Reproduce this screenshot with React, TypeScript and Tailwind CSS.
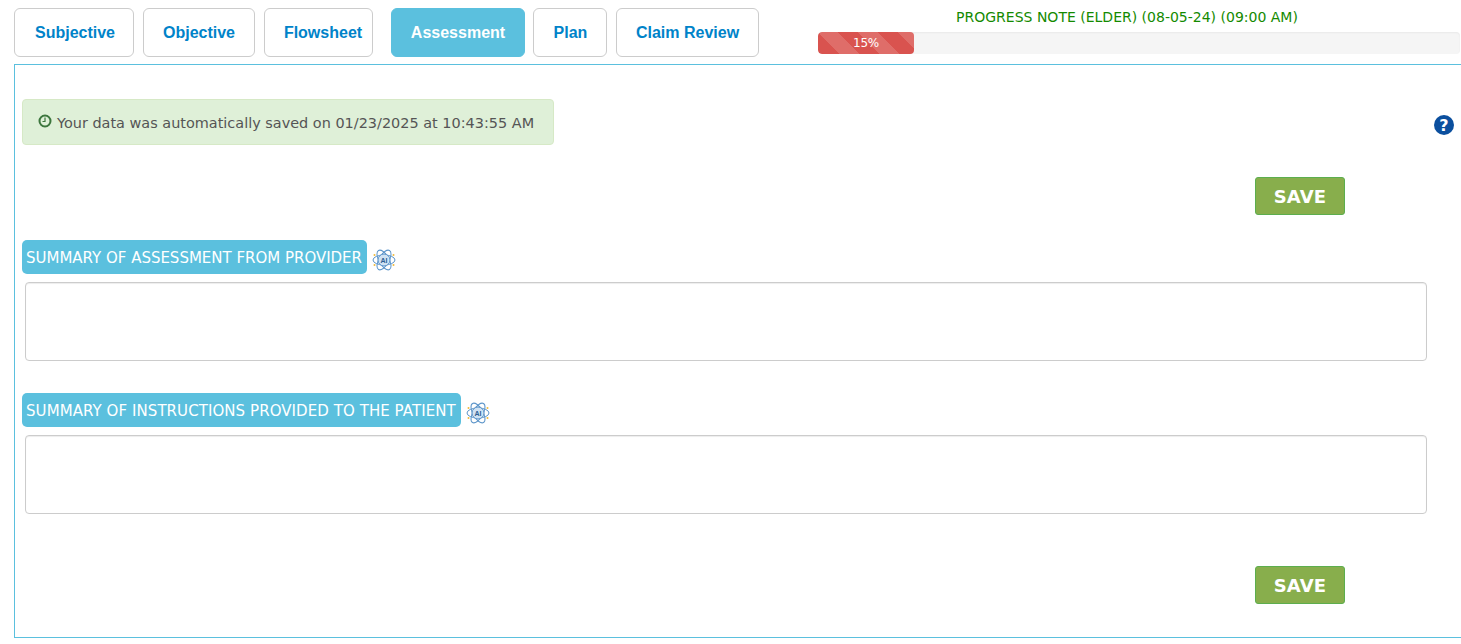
const tabs = [
  { label: 'Subjective', width: 'w-[120px] pl-[2px]' },
  { label: 'Objective', width: 'w-[112px]' },
  { label: 'Flowsheet', width: 'w-[109px] pl-[9px]' },
  { label: 'Assessment', width: 'w-[134px] ml-[9px]', active: true },
  { label: 'Plan', width: 'w-[74px] -ml-[1px] pl-[1px]' },
  { label: 'Claim Review', width: 'w-[143px]' },
];

function AiIcon() {
  return (
    <svg width="24" height="24" viewBox="0 0 24 24" fill="none" className="shrink-0">
      <g stroke="#5b94c9" strokeWidth="1">
        <ellipse cx="12" cy="12" rx="11" ry="5" />
        <ellipse cx="12" cy="12" rx="11" ry="5" transform="rotate(60 12 12)" />
        <ellipse cx="12" cy="12" rx="11" ry="5" transform="rotate(120 12 12)" />
        <circle cx="12" cy="12" r="6" fill="#cfe2f3" />
      </g>
      <circle cx="2.5" cy="7" r="1" fill="#f0b93a" />
      <circle cx="21.5" cy="7" r="1" fill="#f0b93a" />
      <circle cx="2.5" cy="17" r="1" fill="#f0b93a" />
      <circle cx="21.5" cy="17" r="1" fill="#f0b93a" />
      <text x="12" y="14.5" textAnchor="middle" fontSize="7" fontWeight="700" fill="#2c5f94" fontFamily="'Liberation Sans', sans-serif">AI</text>
    </svg>
  );
}

function SaveButton() {
  return (
    <div className="flex justify-end pr-[116px]">
      <button className="w-[90px] h-[38px] bg-[#88ae4c] border border-[#5cae4e] rounded-[3px] text-white font-bold text-[18px] tracking-[0.2px] font-['DejaVu_Sans',sans-serif]">
        SAVE
      </button>
    </div>
  );
}

function SummaryField({ label, pill }: { label: string; pill: string }) {
  return (
    <div>
      <div className="flex items-center gap-[5px]">
        <span className={`${pill} h-[34px] flex items-center pl-[4px] pt-[2px] bg-[#5bc0de] rounded-[5px] text-white text-[15px] whitespace-nowrap`}>
          {label}
        </span>
        <div className="mt-[6px]">
          <AiIcon />
        </div>
      </div>
      <div className="ml-[3px] mt-[8px] w-[1402px] h-[79px] bg-white border border-[#ccc] rounded-[4px] shadow-[inset_0_1px_1px_rgba(0,0,0,0.075)]" />
    </div>
  );
}

export default function App() {
  return (
    <div className="w-[1461px] h-[644px] overflow-hidden bg-white font-['DejaVu_Sans',sans-serif] text-[#555]">
      <div className="flex pl-[14px] pt-[8px] h-[64px]">
        <div className="flex gap-[9px] h-[49px]">
          {tabs.map((tab) => (
            <button
              key={tab.label}
              className={`${tab.width} h-[49px] rounded-[6px] border font-['Liberation_Sans',sans-serif] font-bold text-[16px] ${
                tab.active
                  ? 'bg-[#5bc0de] border-[#5bc0de] text-white'
                  : 'bg-white border-[#ccc] text-[#0083c9]'
              }`}
            >
              {tab.label}
            </button>
          ))}
        </div>
        <div className="ml-[59px] w-[642px]">
          <div className="pr-[24px] text-center text-[14px] leading-[18px] text-[#148a00] whitespace-nowrap">
            PROGRESS NOTE (ELDER) (08-05-24) (09:00 AM)
          </div>
          <div className="mt-[6px] h-[22px] bg-[#f5f5f5] rounded-[4px] overflow-hidden shadow-[inset_0_1px_2px_rgba(0,0,0,0.05)]">
            <div className="w-[96px] h-full rounded-[4px] text-center text-white text-[12px] tracking-[-0.3px] leading-[22px] bg-[#d9534f] bg-[linear-gradient(45deg,rgba(255,255,255,0.15)_25%,transparent_25%,transparent_50%,rgba(255,255,255,0.15)_50%,rgba(255,255,255,0.15)_75%,transparent_75%,transparent)] bg-[length:40px_40px]">
              15%
            </div>
          </div>
        </div>
      </div>

      <div className="ml-[14px] h-[574px] border-t border-l border-b border-[#5bc0de] pl-[7px]">
        <div className="pt-[34px] flex justify-between">
          <div className="w-[532px] h-[46px] flex items-center pl-[15px] pt-[3px] bg-[#dff0d8] border border-[#d6e9c6] rounded-[4px] text-[14.45px] whitespace-nowrap">
            <svg width="14" height="14" viewBox="0 0 14 14" fill="none" className="mr-[5px] mb-[5px] shrink-0">
              <circle cx="7" cy="7" r="5.5" stroke="#3c763d" strokeWidth="2" />
              <path d="M7 3.5V7.5H4.5" stroke="#3c763d" strokeWidth="1.2" />
            </svg>
            Your data was automatically saved on 01/23/2025 at 10:43:55 AM
          </div>
          <svg width="20" height="20" viewBox="0 0 20 20" className="mt-[16px] mr-[7px]">
            <circle cx="10" cy="10" r="10" fill="#0b4f9e" />
            <text x="10" y="16" textAnchor="middle" fontSize="16" fontWeight="700" fill="#fff" fontFamily="'DejaVu Sans', sans-serif">?</text>
          </svg>
        </div>
        <div className="mt-[32px]">
          <SaveButton />
        </div>
        <div className="mt-[25px]">
          <SummaryField label="SUMMARY OF ASSESSMENT FROM PROVIDER" pill="w-[345px] tracking-[-0.01px]" />
        </div>
        <div className="mt-[32px]">
          <SummaryField label="SUMMARY OF INSTRUCTIONS PROVIDED TO THE PATIENT" pill="w-[439px] tracking-[0.07px]" />
        </div>
        <div className="mt-[52px]">
          <SaveButton />
        </div>
      </div>
    </div>
  );
}
